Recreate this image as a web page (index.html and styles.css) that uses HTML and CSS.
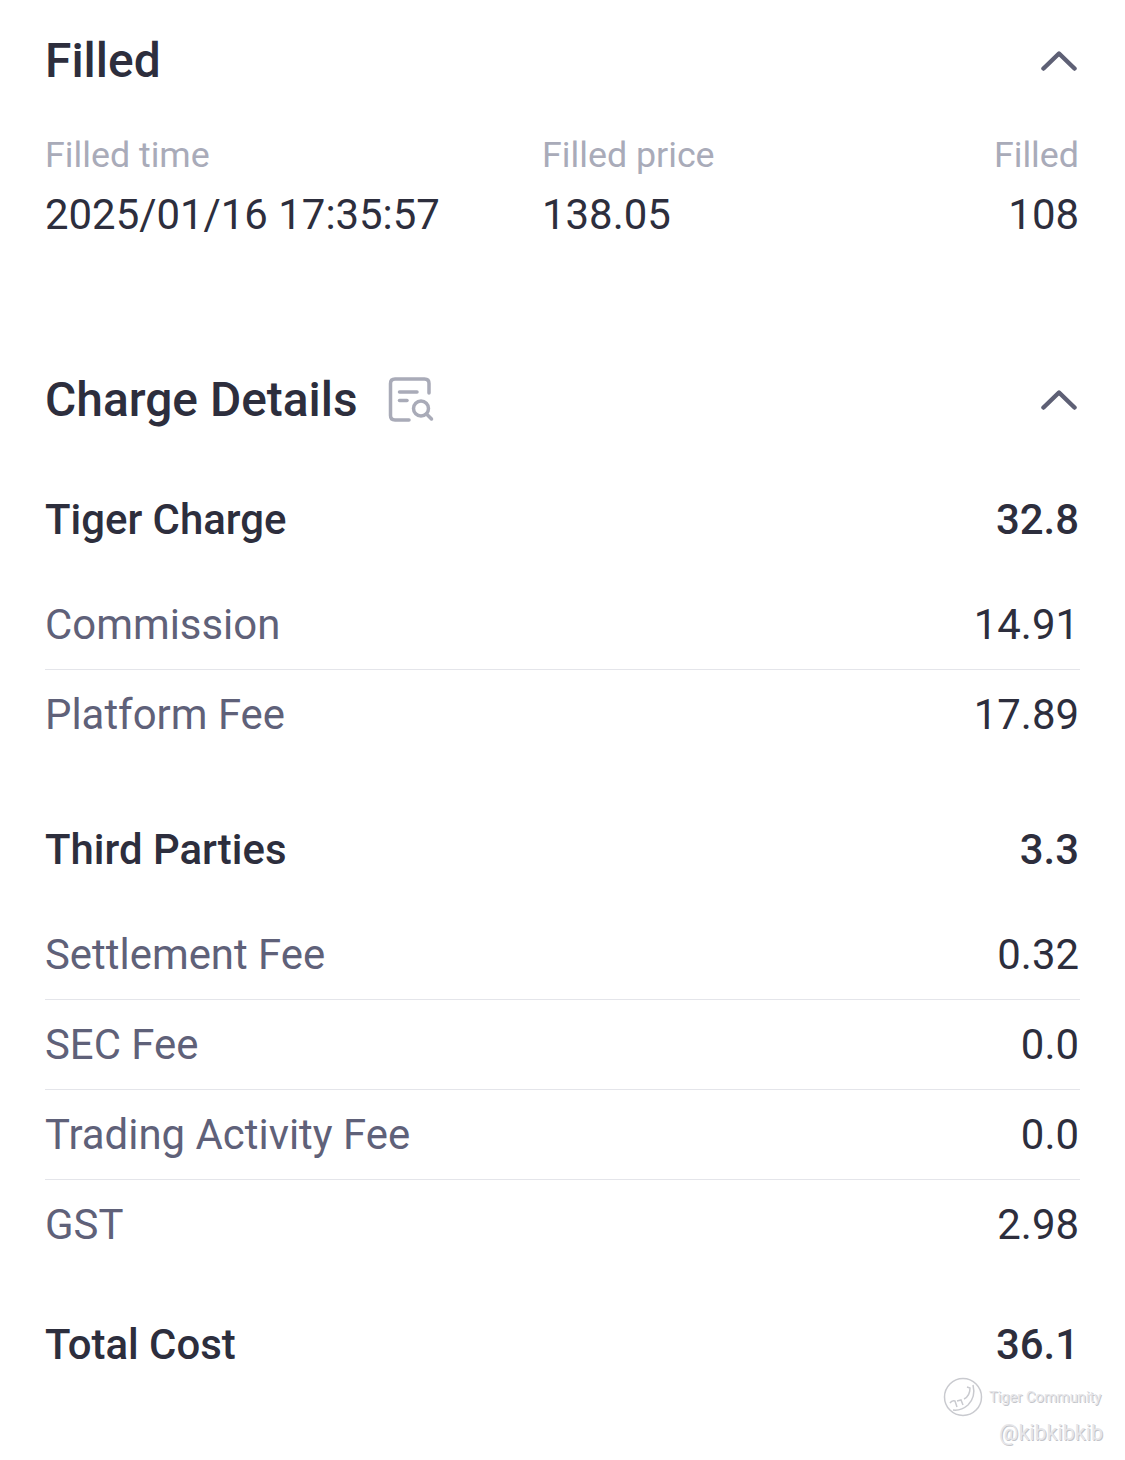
FILE: index.html
```html
<!DOCTYPE html>
<html lang="en">
<head>
<meta charset="utf-8">
<title>Order details</title>
<link rel="stylesheet" href="styles.css">
</head>
<body>
<main class="page">
  <section class="filled">
    <header class="section-head">
      <h2 class="title">Filled</h2>
      <svg class="chevron" viewBox="0 0 36 20" aria-hidden="true"><path d="M2.500 17.500 L18 2.500 L33.500 17.500"/></svg>
    </header>
    <div class="fill-grid">
      <div class="col"><span class="label">Filled time</span><span class="value">2025/01/16 17:35:57</span></div>
      <div class="col"><span class="label">Filled price</span><span class="value">138.05</span></div>
      <div class="col col-end"><span class="label">Filled</span><span class="value">108</span></div>
    </div>
  </section>
  <section class="charges">
    <header class="section-head">
      <div class="title-wrap">
        <h2 class="title">Charge Details</h2>
        <svg class="doc-icon" viewBox="0 0 46 46" aria-hidden="true">
          <path d="M41 16 V6.500 Q41 2 36.500 2 H7 Q2.500 2 2.500 6.500 V38.500 Q2.500 43 7 43 H21"/>
          <path d="M11.500 15 H29"/>
          <path d="M11.500 23.500 H19"/>
          <circle cx="33" cy="31.500" r="7.500"/>
          <path d="M38.500 37 L43.500 42"/>
        </svg>
      </div>
      <svg class="chevron" viewBox="0 0 36 20" aria-hidden="true"><path d="M2.500 17.500 L18 2.500 L33.500 17.500"/></svg>
    </header>
    <div class="group">
      <div class="group-head"><span>Tiger Charge</span><span class="num">32.8</span></div>
      <div class="row"><span class="row-name">Commission</span><span class="num">14.91</span></div>
      <div class="row"><span class="row-name">Platform Fee</span><span class="num">17.89</span></div>
    </div>
    <div class="group">
      <div class="group-head"><span>Third Parties</span><span class="num">3.3</span></div>
      <div class="row"><span class="row-name">Settlement Fee</span><span class="num">0.32</span></div>
      <div class="row"><span class="row-name">SEC Fee</span><span class="num">0.0</span></div>
      <div class="row"><span class="row-name">Trading Activity Fee</span><span class="num">0.0</span></div>
      <div class="row"><span class="row-name">GST</span><span class="num">2.98</span></div>
    </div>
    <div class="total"><span>Total Cost</span><span class="num">36.1</span></div>
  </section>
</main>
<div class="watermark">
  <div class="wm-brand">
    <svg class="wm-logo" viewBox="0 0 40 40" aria-hidden="true">
      <circle cx="20" cy="20" r="18.500"/>
      <path d="M7 26 Q9 23 12 24 L14 30 M14 24 L18 23 L20 28 M21 22 Q27 19 27 11 L24 10 M30 8 Q33 20 25 28 Q18 34 10 33"/>
    </svg>
    <span class="wm-name">Tiger Community</span>
  </div>
  <span class="wm-user">@kibkibkib</span>
</div>
</body>
</html>
```
FILE: styles.css
```css
* { box-sizing: border-box; }
html, body { margin: 0; padding: 0; background: #fff; }
body {
  width: 1125px;
  height: 1460px;
  overflow: hidden;
  position: relative;
  font-family: Roboto, "Liberation Sans", sans-serif;
  color: #2d2e3d;
}
.page { padding: 30px 45px 0 45px; }
.section-head { display: flex; justify-content: space-between; align-items: center; height: 60px; }
.title-wrap { display: flex; align-items: center; gap: 30px; }
.title { margin: 0; padding-top: 2px; font-size: 47.900px; font-weight: 500; line-height: 60px; }
.chevron { width: 36px; height: 20px; margin: 1px 3px 0 0; fill: none; stroke: #5e6075; stroke-width: 4.500px; stroke-linecap: round; stroke-linejoin: round; }
.doc-icon { width: 46px; height: 46px; margin-top: 2px; fill: none; stroke: #a9abb8; stroke-width: 3.500px; stroke-linecap: round; }
.fill-grid { display: grid; grid-template-columns: 497px 1fr auto; margin: 35px 1px 0 0; }
.col { display: flex; flex-direction: column; }
.col-end { align-items: flex-end; }
.label { font-size: 35.800px; line-height: 60px; color: #a9abb9; }
.value { font-size: 41.900px; line-height: 60px; }
.charges { margin-top: 124px; }
.group { margin-top: 59px; }
.group:first-of-type { margin-top: 60px; }
.group-head, .total { display: flex; justify-content: space-between; align-items: center; height: 60px; font-size: 41.900px; font-weight: 500; }
.group-head { margin-bottom: 31px; }
.row { display: flex; justify-content: space-between; align-items: center; height: 90px; border-bottom: 1px solid #e4e5ea; padding-bottom: 1px; font-size: 41.900px; }
.row:last-child { border-bottom: 0; }
.row-name { color: #5f6179; }
.num { margin-right: 1px; }
.total { margin-top: 44px; }
.watermark { position: absolute; left: 943px; top: 1377px; width: 165px; display: flex; flex-direction: column; align-items: flex-end; }
.wm-brand { display: flex; align-items: center; gap: 6px; width: 160px; margin-right: 5px; }
.wm-logo { width: 40px; height: 40px; fill: none; stroke: #c9cacf; stroke-width: 1.500px; flex: none; }
.wm-name { font-size: 14.700px; white-space: nowrap; color: #e6e6e9; text-shadow: 1px 1px 0 #c4c5ca; }
.wm-user { font-size: 21.500px; margin-top: 3px; margin-right: 5px; color: #e6e6e9; text-shadow: 1px 1px 0 #c4c5ca; }
```
